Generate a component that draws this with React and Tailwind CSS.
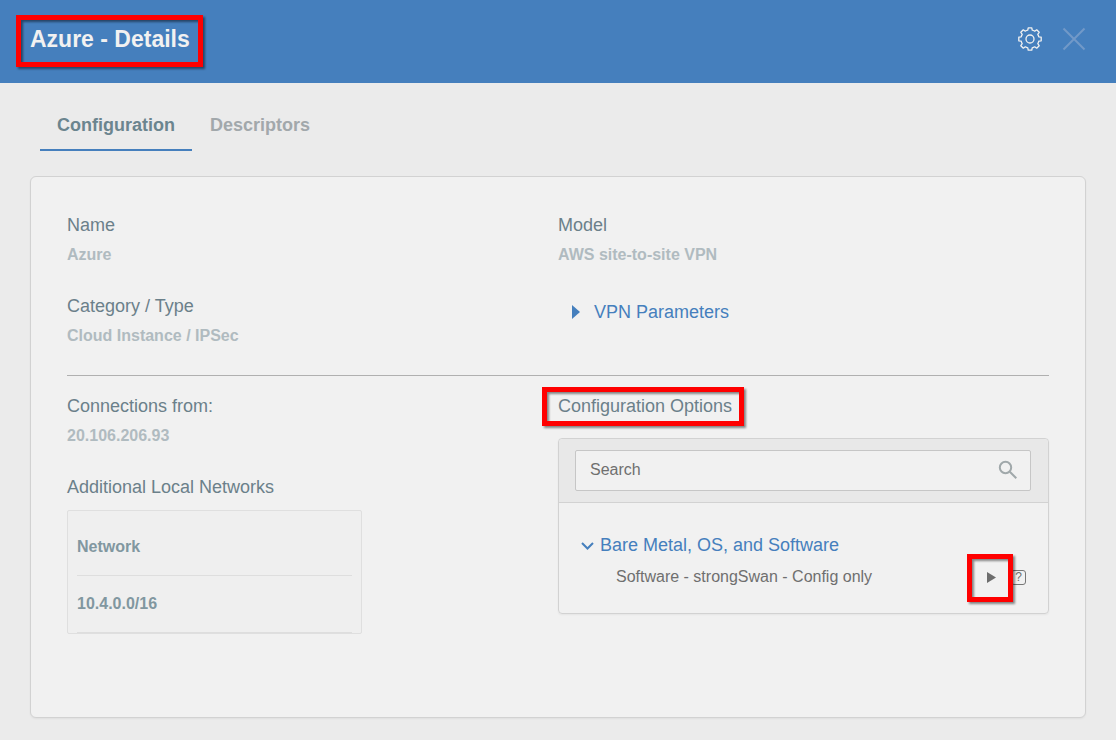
import React from 'react';
import clsx from 'clsx';

function Highlight({ className }) {
  return (
    <span
      aria-hidden="true"
      className={clsx(
        'pointer-events-none absolute border-[5px] border-[#ff0000] drop-shadow-[2px_2px_1px_rgba(0,0,0,0.45)]',
        className
      )}
    />
  );
}

function GearIcon() {
  return (
    <svg width="24" height="24" viewBox="-12 -12 24 24" fill="none" stroke="currentColor" strokeWidth="1.3" strokeLinejoin="round">
      <path d="M-1.8-11.2H1.8L2.2-8.8Q3.5-8.5 4.7-7.8L6.7-9.2L9.2-6.7L7.8-4.7Q8.5-3.5 8.8-2.2L11.2-1.8V1.8L8.8 2.2Q8.5 3.5 7.8 4.7L9.2 6.7L6.7 9.2L4.7 7.8Q3.5 8.5 2.2 8.8L1.8 11.2H-1.8L-2.2 8.8Q-3.5 8.5-4.7 7.8L-6.7 9.2L-9.2 6.7L-7.8 4.7Q-8.5 3.5-8.8 2.2L-11.2 1.8V-1.8L-8.8-2.2Q-8.5-3.5-7.8-4.7L-9.2-6.7L-6.7-9.2L-4.7-7.8Q-3.5-8.5-2.2-8.8Z" />
      <circle r="4" />
    </svg>
  );
}

function Field({ label, value }) {
  return (
    <div className="space-y-1.5">
      <dt className="text-lg leading-6 text-[#6b808a]">{label}</dt>
      <dd className="text-base leading-6 font-bold text-[#b0bbc0]">{value}</dd>
    </div>
  );
}

function NetworkTable({ networks }) {
  return (
    <div className="mt-[11px] w-3/5 rounded-xs border border-[#dfdfdf] bg-[#efefef] px-[9px]">
      <table className="w-full text-left text-base leading-6 text-[#8197a0]">
        <thead>
          <tr className="border-b border-[#dedede]">
            <th scope="col" className="pt-6 pb-4 font-bold">Network</th>
          </tr>
        </thead>
        <tbody>
          {networks.map((network) => (
            <tr key={network} className="border-b border-[#dedede]">
              <td className="py-4 font-bold">{network}</td>
            </tr>
          ))}
        </tbody>
      </table>
    </div>
  );
}

function ConfigurationOptions() {
  return (
    <div className="mt-5 rounded-sm border border-[#d2d2d2] shadow-xs">
      <div className="rounded-t-sm border-b border-[#d2d2d2] bg-[#e8e8e8] pt-[11px] pr-[17px] pb-[11px] pl-4">
        <div className="flex h-[41px] items-center rounded-xs border border-[#c6c6c6] bg-[#f1f1f1] pr-3 pb-0.5 pl-3.5">
          <input
            type="text"
            aria-label="Search"
            placeholder="Search"
            className="min-w-0 flex-1 bg-transparent text-base leading-6 text-[#6f6f6f] outline-none placeholder:text-[#6f6f6f]"
          />
          <svg width="20" height="20" viewBox="0 0 20 20" fill="none" stroke="#a0a8aa" strokeWidth="2">
            <circle cx="7.5" cy="7.5" r="5.7" />
            <path d="M11.8 11.8L18.3 18.3" />
          </svg>
        </div>
      </div>
      <div className="px-[22px] pt-[30px] pb-6">
        <button type="button" className="flex items-center gap-1.5 text-lg leading-6 text-[#457fbd]">
          <svg width="13" height="8" viewBox="0 0 13 8" fill="none" stroke="currentColor" strokeWidth="2" className="mt-0.5">
            <path d="M1 1L6.5 6.5L12 1" />
          </svg>
          Bare Metal, OS, and Software
        </button>
        <div className="mt-2 flex items-center justify-between pl-[35px]">
          <span className="text-base leading-6 text-[#6f6f6f]">Software - strongSwan - Config only</span>
          <div className="flex items-center gap-[15px]">
            <button type="button" aria-label="Run configuration" className="relative text-[#6d6d6d]">
              <svg width="9" height="11" viewBox="0 0 9 11" fill="currentColor">
                <path d="M0 0L9 5.5L0 11Z" />
              </svg>
              <Highlight className="-top-[18px] -left-5 z-10 h-12 w-[46px]" />
            </button>
            <button
              type="button"
              aria-label="Help"
              className="flex h-[15px] w-[15px] items-center justify-center rounded-[3px] border border-[#777777] text-xs leading-3 text-[#6d6d6d]"
            >
              ?
            </button>
          </div>
        </div>
      </div>
    </div>
  );
}

export default function App() {
  return (
    <div className="min-h-screen bg-[#ebebeb] pb-[22px] font-['Liberation_Sans',Arial,sans-serif]">
      <header className="flex h-[83px] items-start justify-between bg-[#457fbd] px-[30px] pt-6 text-[#f1f1f1]">
        <div className="relative">
          <h1 className="text-[23px] leading-[30px] font-bold">Azure - Details</h1>
          <Highlight className="-top-[9px] -left-3.5 h-[52px] w-[187px]" />
        </div>
        <div className="flex h-[30px] items-center gap-5">
          <button type="button" aria-label="Settings">
            <GearIcon />
          </button>
          <button type="button" aria-label="Close" className="text-[#7299c8]">
            <svg width="24" height="24" viewBox="0 0 24 24" fill="none" stroke="currentColor" strokeWidth="2">
              <path d="M1.5 1.5L22.5 22.5M22.5 1.5L1.5 22.5" />
            </svg>
          </button>
        </div>
      </header>

      <nav role="tablist" className="flex px-10 pt-[30px] text-lg leading-6 font-bold">
        <button type="button" role="tab" aria-selected="true" className="border-b-2 border-[#457fbd] px-[17px] pb-3 text-[#6b858f]">
          Configuration
        </button>
        <button type="button" role="tab" aria-selected="false" className="border-b-2 border-transparent px-[18px] pb-3 text-[#a2a8ab]">
          Descriptors
        </button>
      </nav>

      <main className="mx-[30px] mt-[25px] rounded-md border border-[#d2d2d2] bg-[#f1f1f1] px-9 pt-9 pb-[83px] shadow-xs">
        <section className="grid grid-cols-2 border-b border-[#b0b0b0] pb-[27px]">
          <dl className="space-y-[27px]">
            <Field label="Name" value="Azure" />
            <Field label="Category / Type" value="Cloud Instance / IPSec" />
          </dl>
          <div>
            <dl>
              <Field label="Model" value="AWS site-to-site VPN" />
            </dl>
            <button type="button" className="mt-[33px] ml-3.5 flex items-center gap-3.5 text-lg leading-6 text-[#457fbd]">
              <svg width="8" height="14" viewBox="0 0 8 14" fill="currentColor">
                <path d="M0 0L8 7L0 14Z" />
              </svg>
              VPN Parameters
            </button>
          </div>
        </section>

        <section className="grid grid-cols-2 pt-[18px]">
          <div>
            <dl>
              <Field label="Connections from:" value="20.106.206.93" />
            </dl>
            <h2 className="mt-[27px] text-lg leading-6 text-[#6b808a]">Additional Local Networks</h2>
            <NetworkTable networks={['10.4.0.0/16']} />
          </div>
          <div>
            <div className="relative">
              <h2 className="text-lg leading-6 text-[#6b808a]">Configuration Options</h2>
              <Highlight className="-top-[7px] -left-4 h-[39px] w-[202px]" />
            </div>
            <ConfigurationOptions />
          </div>
        </section>
      </main>
    </div>
  );
}
